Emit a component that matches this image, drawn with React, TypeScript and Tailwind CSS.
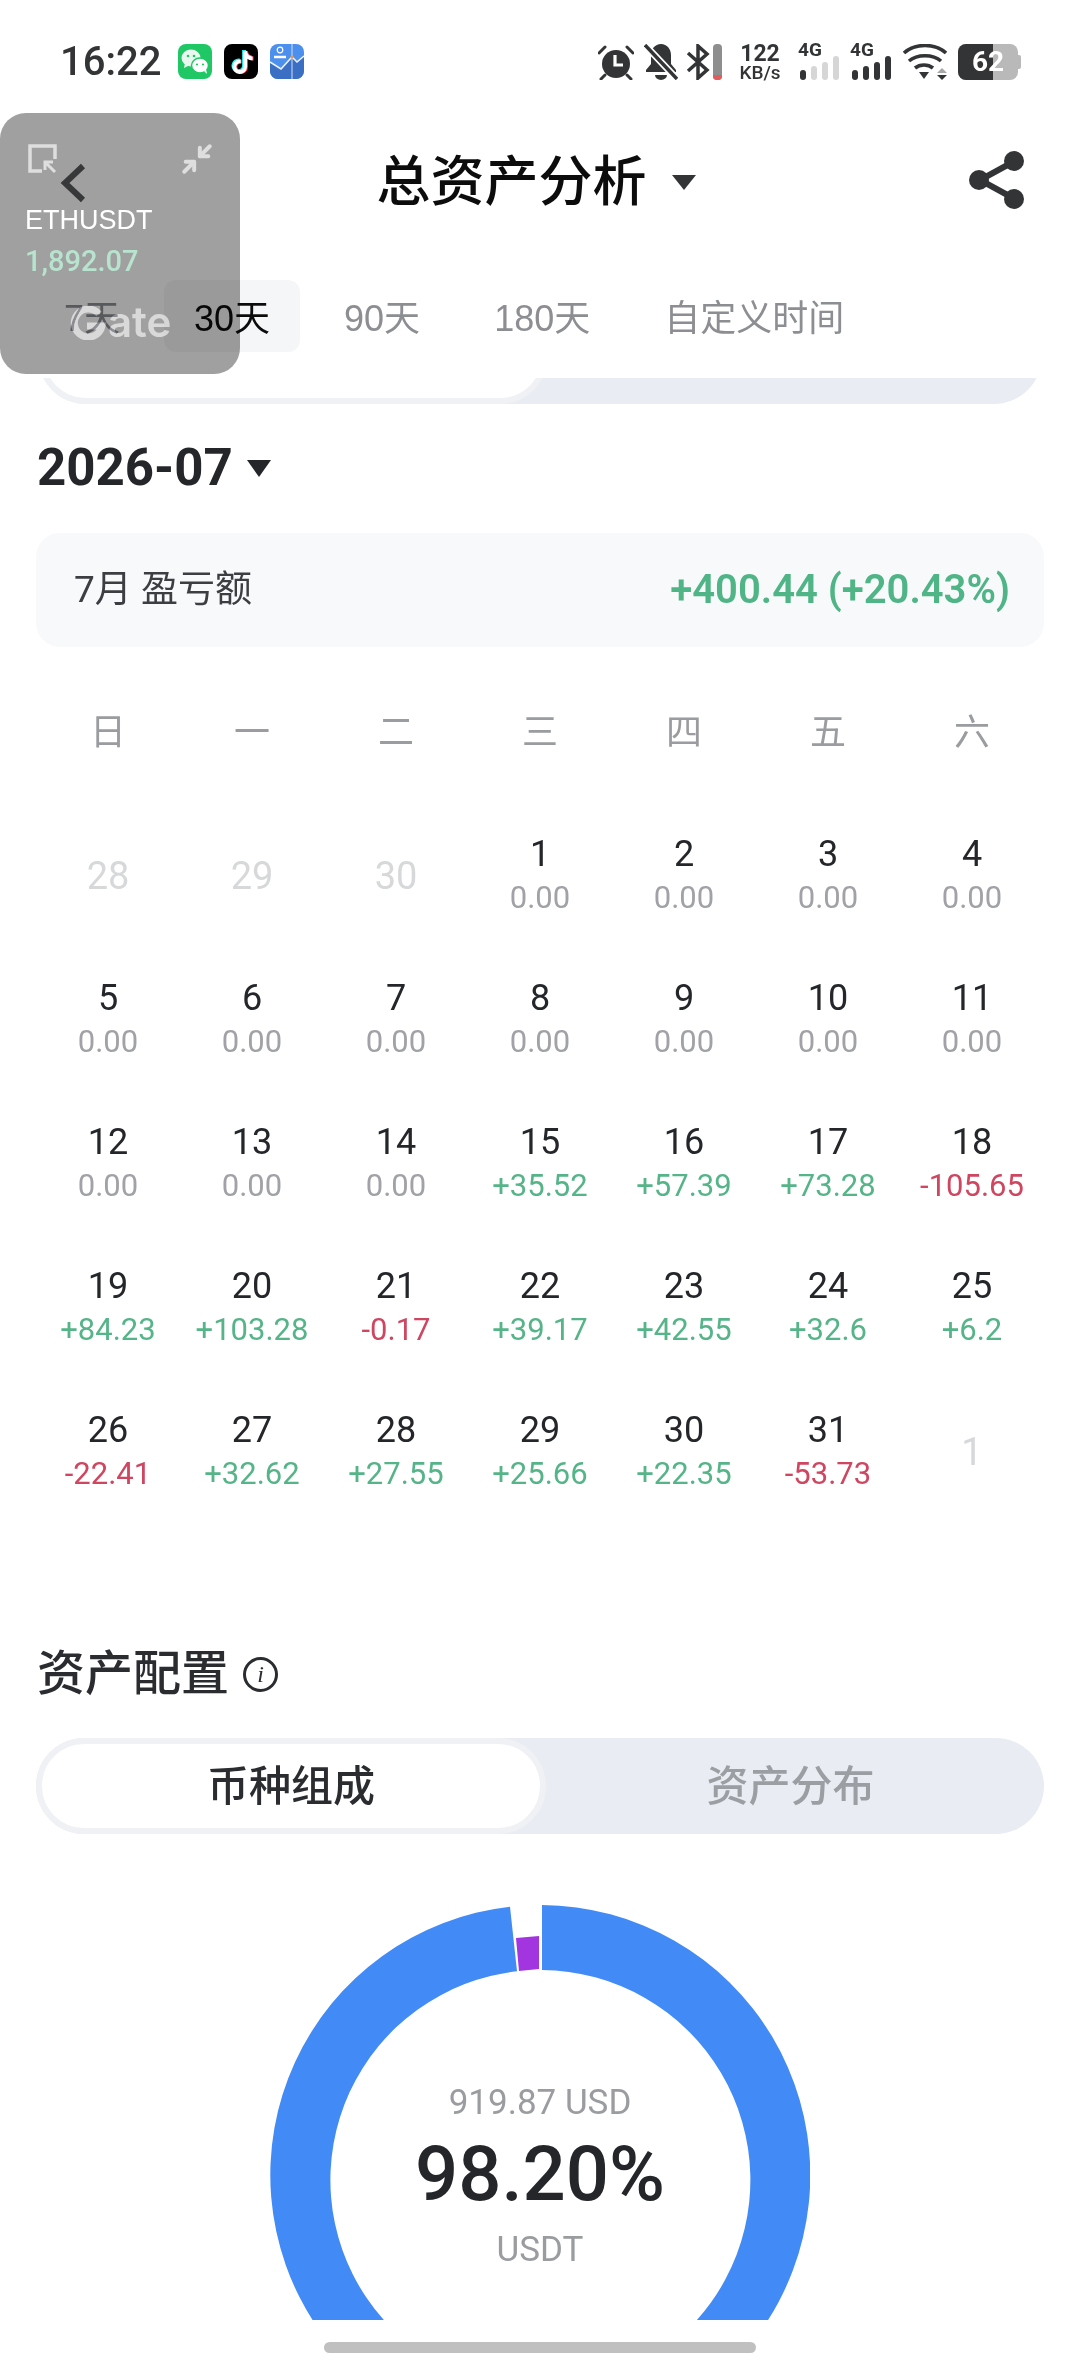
import { FaTiktok } from "react-icons/fa6";
import { Minimize2 } from "lucide-react";

type Day = { d: string; v?: string; tone?: "up" | "down" | "flat" };

const tabs = ["7天", "30天", "90天", "180天", "自定义时间"];
const weekdays = ["日", "一", "二", "三", "四", "五", "六"];

const days: Day[] = [
  { d: "28" }, { d: "29" }, { d: "30" },
  { d: "1", v: "0.00", tone: "flat" }, { d: "2", v: "0.00", tone: "flat" }, { d: "3", v: "0.00", tone: "flat" }, { d: "4", v: "0.00", tone: "flat" },
  { d: "5", v: "0.00", tone: "flat" }, { d: "6", v: "0.00", tone: "flat" }, { d: "7", v: "0.00", tone: "flat" }, { d: "8", v: "0.00", tone: "flat" },
  { d: "9", v: "0.00", tone: "flat" }, { d: "10", v: "0.00", tone: "flat" }, { d: "11", v: "0.00", tone: "flat" },
  { d: "12", v: "0.00", tone: "flat" }, { d: "13", v: "0.00", tone: "flat" }, { d: "14", v: "0.00", tone: "flat" },
  { d: "15", v: "+35.52", tone: "up" }, { d: "16", v: "+57.39", tone: "up" }, { d: "17", v: "+73.28", tone: "up" }, { d: "18", v: "-105.65", tone: "down" },
  { d: "19", v: "+84.23", tone: "up" }, { d: "20", v: "+103.28", tone: "up" }, { d: "21", v: "-0.17", tone: "down" },
  { d: "22", v: "+39.17", tone: "up" }, { d: "23", v: "+42.55", tone: "up" }, { d: "24", v: "+32.6", tone: "up" }, { d: "25", v: "+6.2", tone: "up" },
  { d: "26", v: "-22.41", tone: "down" }, { d: "27", v: "+32.62", tone: "up" }, { d: "28", v: "+27.55", tone: "up" },
  { d: "29", v: "+25.66", tone: "up" }, { d: "30", v: "+22.35", tone: "up" }, { d: "31", v: "-53.73", tone: "down" },
  { d: "1" },
];

const toneClass = { up: "text-[#55b488]", down: "text-[#cf4661]", flat: "text-[#a0a2a6]" };

function SignalBars({ lit }: { lit: number }) {
  const heights = ["h-[10px]", "h-[14px]", "h-[18px]", "h-[24px]"];
  return (
    <div className="flex items-end gap-[5px]">
      {heights.map((h, i) => (
        <div key={h} className={`w-[6px] rounded-[3px] ${h} ${i < lit ? "bg-[#333436]" : "bg-[#d6d6d6]"}`} />
      ))}
    </div>
  );
}

function Network({ lit }: { lit: number }) {
  return (
    <div className="relative h-[36px] w-[44px]">
      <span className="absolute left-0 top-[-4px] text-[19px] font-bold leading-[20px] text-[#333436]">4G</span>
      <div className="absolute bottom-0 left-[2px]"><SignalBars lit={lit} /></div>
    </div>
  );
}

function StatusBar() {
  return (
    <div className="flex h-[113px] items-start justify-between pl-[60px] pr-[59px] pt-[44px]">
      <div className="flex items-center">
        <span className="w-[118px] text-[40px] font-medium leading-[35px] text-[#333436]">16:22</span>
        <svg width="34" height="35" viewBox="0 0 34 35">
          <rect width="34" height="35" rx="8" fill="#1fc864" />
          <ellipse cx="13" cy="14" rx="9.500" ry="8.500" fill="#e8f8ee" />
          <path d="M7 19l-1 5 6-3z" fill="#e8f8ee" />
          <ellipse cx="22" cy="21.500" rx="8.500" ry="7.500" fill="#fff" stroke="#1fc864" strokeWidth="1.500" />
          <path d="M26 27l3 3-1-5z" fill="#fff" />
          <circle cx="10" cy="12" r="1.300" fill="#1fc864" />
          <circle cx="16" cy="12" r="1.300" fill="#1fc864" />
          <circle cx="19" cy="20.500" r="1.100" fill="#1fc864" />
          <circle cx="25" cy="20.500" r="1.100" fill="#1fc864" />
        </svg>
        <div className="relative ml-[12px] h-[35px] w-[34px] rounded-[8px] bg-black">
          <FaTiktok className="absolute left-[6px] top-[6px] text-[23px] text-[#25f4ee]" />
          <FaTiktok className="absolute left-[8px] top-[7px] text-[23px] text-[#fe2c55]" />
          <FaTiktok className="absolute left-[7px] top-[6.500px] text-[23px] text-white" />
        </div>
        <svg width="34" height="35" viewBox="0 0 34 35" className="ml-[12px]">
          <rect width="34" height="35" rx="8" fill="#4d8fec" />
          <path d="M0 18l11 7 11-12 5 5 7-6v15a8 8 0 0 1-8 8H8a8 8 0 0 1-8-8z" fill="#3b6fc4" />
          <path d="M0 18l11 7 11-12 5 5 7-6" fill="none" stroke="#eaf2ff" strokeWidth="1.600" />
          <path d="M22 0v35" stroke="#cfe0f8" strokeWidth="1" />
          <circle cx="10" cy="6" r="2.800" fill="none" stroke="#fff" strokeWidth="1.200" />
          <path d="M4 13h12" stroke="#fff" strokeWidth="2.500" />
          <circle cx="22" cy="13" r="1.600" fill="#e79a4a" />
        </svg>
      </div>
      <div className="flex items-start">
        <svg width="36" height="36" viewBox="0 0 36 36">
          <path d="M1 9l6-6M35 9l-6-6M7 31l-4 4M29 31l4 4" stroke="#333436" strokeWidth="3" strokeLinecap="round" />
          <circle cx="18" cy="20" r="14" fill="#333436" />
          <path d="M17 11v10h8" fill="none" stroke="#fff" strokeWidth="3.200" />
        </svg>
        <svg width="34" height="36" viewBox="0 0 34 36" className="ml-[10px]">
          <path d="M17 0c6 0 10 5 10 11v9l5 6v2H2v-2l5-6V11C7 5 11 0 17 0z" fill="#333436" />
          <path d="M11 31h12a6 5 0 0 1-12 0z" fill="#333436" />
          <path d="M0 0l34 36" stroke="#fff" strokeWidth="7" />
          <path d="M1 1l32 34" stroke="#333436" strokeWidth="3.500" />
        </svg>
        <svg width="24" height="36" viewBox="0 0 24 36" fill="none" className="ml-[8px]" stroke="#333436" strokeWidth="3.500">
          <path d="M2 9l19 17-9 8V2l9 8L2 27" />
        </svg>
        <div className="relative ml-[3px] h-[36px] w-[9px] overflow-hidden rounded-[4px] bg-[#8e8e8e]">
          <div className="absolute bottom-0 h-[5px] w-full bg-[#e25c5c]" />
        </div>
        <div className="ml-[15px] flex w-[46px] flex-col items-center text-[#333436]">
          <span className="text-[23px] font-bold leading-[20px]">122</span>
          <span className="text-[19px] font-medium leading-[18px]">KB/s</span>
        </div>
        <div className="ml-[15px]"><Network lit={1} /></div>
        <div className="ml-[8px]"><Network lit={4} /></div>
        <svg width="44" height="36" viewBox="0 0 44 36" className="ml-[9px]">
          <path d="M1 9c11-10 31-10 42 0" fill="none" stroke="#333436" strokeWidth="3.600" />
          <path d="M6 17c8-7 24-7 32 0" fill="none" stroke="#333436" strokeWidth="3.600" />
          <path d="M12 24c5-4 13-4 18 0" fill="none" stroke="#333436" strokeWidth="3.600" />
          <path d="M16 28h10l-5 7z" fill="#333436" />
          <path d="M39 24l5 5H34z" fill="#a8a8a8" />
          <path d="M39 36l5-5H34z" fill="#333436" />
        </svg>
        <div className="ml-[11px] flex items-center">
          <div className="relative flex h-[36px] w-[60px] overflow-hidden rounded-[8px] bg-[#b9b9b9]">
            <div className="h-full w-[35px] bg-[#333436]" />
            <span className="absolute inset-0 pl-[14px] text-[28px] font-bold leading-[36px] text-white">62</span>
          </div>
          <div className="h-[14px] w-[3px] rounded-r-[2px] bg-[#b9b9b9]" />
        </div>
      </div>
    </div>
  );
}

function Segment({ left, right }: { left: string; right: string }) {
  return (
    <div className="flex h-[96px] rounded-[48px] bg-[#e9ecf3]">
      <div className="flex h-full w-[510px] items-center justify-center rounded-[48px] border-[6px] border-[#eff1f4] bg-white text-[42px] font-medium text-[#2a2c30]">
        {left}
      </div>
      <div className="flex flex-1 items-center justify-center pr-[9px] text-[42px] font-medium text-[#9b9ea3]">
        {right}
      </div>
    </div>
  );
}

function FloatingWindow() {
  return (
    <div className="absolute left-0 top-[113px] h-[261px] w-[240px]">
      <div className="absolute inset-0 rounded-[26px] bg-[#a0a0a0] mix-blend-multiply" />
      <svg width="30" height="30" viewBox="0 0 30 30" fill="none" className="absolute left-[28px] top-[31px]" stroke="#dedede" strokeWidth="3.500">
        <path d="M14 27H2V2h25v13" />
        <path d="M27 28l-9-9M17 26v-8h8" strokeWidth="3" />
      </svg>
      <Minimize2 className="absolute left-[180px] top-[29px] h-[34px] w-[34px] text-[#dedede]" strokeWidth={2.800} />
      <span className="absolute left-[25px] top-[90px] font-['Liberation_Sans',sans-serif] text-[27px] leading-[34px] text-white">ETHUSDT</span>
      <span className="absolute left-[25px] top-[131px] text-[29px] font-medium leading-[34px] text-[#b8e3cf]">1,892.07</span>
      <svg width="38" height="34" viewBox="0 0 38 34" fill="none" className="absolute left-[69px] top-[193px] mix-blend-overlay" stroke="white" strokeOpacity="0.6" strokeWidth="7">
        <path d="M30 8a14 14 0 1 0 3 12H18" />
      </svg>
      <span className="absolute left-[108px] top-[185px] font-['Inter',sans-serif] text-[42px] font-semibold leading-[48px] text-white/60 mix-blend-overlay">ate</span>
    </div>
  );
}

export default function App() {
  return (
    <div className="relative h-[2376px] w-[1080px] overflow-hidden bg-white font-['Roboto','Noto_Sans_CJK_SC',sans-serif]">
      <StatusBar />

      <div className="relative flex h-[139px] items-center justify-center">
        <svg width="26" height="40" viewBox="0 0 26 40" fill="none" className="absolute left-[60px] top-[50px]">
          <path d="M23 3L5 20l18 17" stroke="#58595c" strokeWidth="6" />
        </svg>
        <div className="mr-[8px] flex items-center">
          <span className="text-[54px] font-medium leading-[64px] text-[#0c0c0c]">总资产分析</span>
          <div className="ml-[25px] h-0 w-0 border-x-[12px] border-t-[15px] border-x-transparent border-t-[#333436]" />
        </div>
        <svg width="56" height="58" viewBox="0 0 56 58" className="absolute left-[969px] top-[38px]">
          <path d="M44 11L11 29l33 18" fill="none" stroke="#333436" strokeWidth="6" />
          <circle cx="45" cy="10" r="10" fill="#333436" />
          <circle cx="10" cy="29" r="10" fill="#333436" />
          <circle cx="45" cy="48" r="10" fill="#333436" />
        </svg>
      </div>

      <div className="mt-[28px] flex h-[72px] items-center gap-[14px] px-[34px] font-['Liberation_Sans','Noto_Sans_CJK_SC',sans-serif]">
        {tabs.map((t) => (
          <div
            key={t}
            className={`flex h-full items-center rounded-[12px] px-[30px] pt-[6px] text-[36px] ${t === "30天" ? "bg-[#f5f6f8] text-[#0c0c0c]" : "text-[#8c8e92]"}`}
          >
            {t}
          </div>
        ))}
      </div>

      <div className="mx-[38px] mt-[26px] h-[26px] overflow-hidden">
        <div className="mt-[-70px]">
          <Segment left="" right="" />
        </div>
      </div>

      <div className="mx-[37px] mt-[33px] flex h-[62px] items-center">
        <span className="text-[51px] font-bold leading-[62px] text-[#24262a]">2026-07</span>
        <div className="ml-[14px] h-0 w-0 border-x-[12px] border-t-[17px] border-x-transparent border-t-[#24262a]" />
      </div>

      <div className="mx-[36px] mt-[34px] flex h-[114px] items-center justify-between rounded-[24px] bg-[#f8f9fb] pl-[38px] pr-[34px]">
        <span className="text-[37px] text-[#3c3e42]">7月 盈亏额</span>
        <span className="text-[40px] font-semibold text-[#4fb486]">+400.44 (+20.43%)</span>
      </div>

      <div className="mx-[36px] mt-[56px] grid h-[60px] grid-cols-7 items-center text-center text-[36px] text-[#9a9c9f]">
        {weekdays.map((w) => (
          <span key={w}>{w}</span>
        ))}
      </div>

      <div className="mx-[36px] mt-[40px] grid grid-cols-7">
        {days.map((day, i) => (
          <div key={i} className="flex h-[144px] flex-col items-center justify-center pt-[1px]">
            {day.v ? (
              <>
                <span className="text-[36px] leading-[44px] text-[#24262a]">{day.d}</span>
                <span className={`text-[31px] leading-[44px] ${toneClass[day.tone ?? "flat"]}`}>{day.v}</span>
              </>
            ) : (
              <span className="text-[38px] leading-[44px] text-[#d6d8da]">{day.d}</span>
            )}
          </div>
        ))}
      </div>

      <div className="mx-[37px] mt-[119px] flex h-[64px] items-center">
        <span className="text-[48px] font-medium leading-[64px] text-[#2a2c30]">资产配置</span>
        <div className="ml-[14px] flex h-[35px] w-[35px] items-center justify-center rounded-full border-[3px] border-[#2a2c30] font-['Liberation_Serif',serif] text-[24px] italic leading-none text-[#2a2c30]">
          i
        </div>
      </div>

      <div className="mx-[36px] mt-[32px]">
        <Segment left="币种组成" right="资产分布" />
      </div>

      <div className="relative mx-auto mt-[71px] h-[415px] w-[540px]">
        <svg width="540" height="415" viewBox="0 0 540 415">
          <path d="M272 0A270 270 0 1 1 240 1.700L247 66.300A210 210 0 1 0 272 65Z" fill="#428bf7" />
          <path d="M246 33L269 31V64L249 66Z" fill="#a335e0" />
        </svg>
        <div className="absolute inset-x-0 top-[178px] text-center text-[35px] leading-[40px] text-[#9a9c9f]">919.87 USD</div>
        <div className="absolute inset-x-0 top-[224px] text-center text-[76px] font-medium leading-[90px] text-[#24262a]">98.20%</div>
        <div className="absolute inset-x-0 top-[325px] text-center text-[35px] leading-[40px] text-[#9a9c9f]">USDT</div>
      </div>

      <div className="mx-auto mt-[22px] h-[11px] w-[432px] rounded-full bg-[#c0c0c0]" />

      <FloatingWindow />
    </div>
  );
}
